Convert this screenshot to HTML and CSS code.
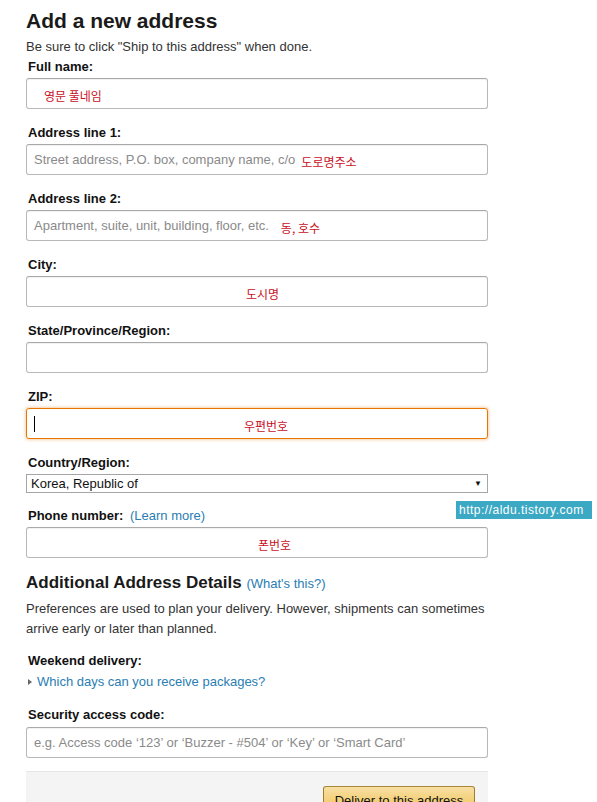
FILE: index.html
```html
<!doctype html>
<html>
    <head>
        <title>Add a new address</title>
        <meta name="viewport" content="width=device-width, initial-scale=1.0" />
        <link rel="stylesheet" href="styles.css">
    </head>
    <body>
        <div class="page">
            <h1>Add a new address</h1>
            <p class="intro">Be sure to click "Ship to this address" when done.</p>

            <div class="group">
                <label class="label">Full name:</label>
                <div class="field"><span class="note note-name">영문 풀네임</span></div>
            </div>
            <div class="group">
                <label class="label">Address line 1:</label>
                <div class="field"><span class="hint">Street address, P.O. box, company name, c/o</span><span class="note note-addr1">도로명주소</span></div>
            </div>
            <div class="group">
                <label class="label">Address line 2:</label>
                <div class="field"><span class="hint">Apartment, suite, unit, building, floor, etc.</span><span class="note note-addr2">동, 호수</span></div>
            </div>
            <div class="group">
                <label class="label">City:</label>
                <div class="field"><span class="note note-city">도시명</span></div>
            </div>
            <div class="group">
                <label class="label">State/Province/Region:</label>
                <div class="field"></div>
            </div>
            <div class="group">
                <label class="label">ZIP:</label>
                <div class="field focused"><span class="caret"></span><span class="note note-zip">우편번호</span></div>
            </div>
            <div class="group group-select">
                <label class="label">Country/Region:</label>
                <div class="select"><span>Korea, Republic of</span><span class="arrow">&#9660;</span></div>
            </div>
            <div class="group group-phone">
                <label class="label">Phone number: <a href="#" class="link">(Learn more)</a></label>
                <div class="field"><span class="note note-phone">폰번호</span></div>
            </div>

            <h2>Additional Address Details <a href="#" class="link">(What's this?)</a></h2>
            <p class="desc">Preferences are used to plan your delivery. However, shipments can sometimes arrive early or later than planned.</p>

            <div class="group">
                <label class="label">Weekend delivery:</label>
                <div class="toggle"><span class="triangle"></span><a href="#" class="link">Which days can you receive packages?</a></div>
            </div>
            <div class="group group-code">
                <label class="label">Security access code:</label>
                <div class="field"><span class="hint">e.g. Access code ‘123’ or ‘Buzzer - #504’ or ‘Key’ or ‘Smart Card’</span></div>
            </div>

            <div class="footer">
                <button class="deliver">Deliver to this address</button>
            </div>
        </div>
        <div class="watermark">http://aldu.tistory.com</div>
    </body>
</html>
```

FILE: styles.css
```css
body {
    margin: 0;
    font-family: "Liberation Sans", Arial, sans-serif;
    font-size: 13px;
    line-height: 19px;
    color: #111;
    background: #fff;
    position: relative;
}
.page {
    padding-left: 26px;
    width: 462px;
}
h1 {
    font-size: 21px;
    line-height: 25px;
    font-weight: 700;
    margin: 8px 0 4px 0;
    color: #1a1a1a;
}
.intro {
    margin: 0 0 1px 0;
    color: #333;
}
.group {
    margin-bottom: 14px;
}
.label {
    display: block;
    font-weight: 700;
    padding-left: 2px;
    margin-bottom: 2px;
    color: #111;
}
.label .link {
    font-weight: 400;
    margin-left: 3px;
}
.field {
    box-sizing: border-box;
    height: 31px;
    border: 1px solid #b8b8b8;
    border-top-color: #a9a9a9;
    border-radius: 3px;
    box-shadow: 0 1px 0 rgba(0,0,0,.05) inset;
    padding: 0 7px;
    display: flex;
    align-items: center;
    white-space: nowrap;
    overflow: hidden;
}
.field.focused {
    border-color: #e77600;
    box-shadow: 0 0 3px 1px rgba(228,121,17,.35);
}
.hint {
    color: #8a8a8a;
}
.note {
    font-family: "Noto Sans CJK KR", sans-serif;
    font-size: 12px;
    color: #c8101e;
    padding-top: 3px;
}
.note-name { margin-left: 10px; }
.note-addr1 { margin-left: 6px; }
.note-addr2 { margin-left: 12px; }
.note-city { margin-left: 212px; }
.note-zip { margin-left: 209px; }
.note-phone { margin-left: 224px; }
.caret {
    width: 1px;
    height: 16px;
    background: #000;
}
.group-select {
    margin-bottom: 13px;
}
.select {
    box-sizing: border-box;
    height: 19px;
    margin-top: 1px;
    border: 1px solid #a6a6a6;
    padding: 0 5px 0 4px;
    display: flex;
    align-items: center;
    justify-content: space-between;
}
.arrow {
    font-size: 8px;
    line-height: 8px;
    color: #111;
}
.link {
    color: #2a7db3;
    text-decoration: none;
}
h2 {
    font-size: 17px;
    line-height: 22px;
    font-weight: 700;
    margin: 0 0 4px 0;
    color: #1a1a1a;
}
h2 .link {
    font-size: 13px;
    font-weight: 400;
}
.desc {
    line-height: 20px;
    margin: 0 0 12px 0;
    color: #333;
}
.toggle {
    display: flex;
    align-items: center;
    padding-left: 2px;
}
.triangle {
    width: 0;
    height: 0;
    border-left: 4px solid #666;
    border-top: 3px solid transparent;
    border-bottom: 3px solid transparent;
    margin-right: 5px;
}
.group-code .label {
    margin-bottom: 3px;
}
.group-code {
    margin-bottom: 13px;
}
.footer {
    background: #f4f4f4;
    border-top: 1px solid #e6e6e6;
    padding: 14px 13px 0 0;
    height: 60px;
    display: flex;
    justify-content: flex-end;
    align-items: flex-start;
}
.deliver {
    width: 152px;
    height: 29px;
    border: 1px solid #a88734;
    border-color: #a88734 #9c7e31 #846a29;
    border-radius: 3px;
    background: linear-gradient(to bottom, #f7dfa5, #f0c14b);
    font-family: "Liberation Sans", Arial, sans-serif;
    font-size: 13px;
    color: #111;
    padding: 0;
}
.watermark {
    position: absolute;
    left: 456px;
    top: 501px;
    width: 136px;
    height: 18px;
    line-height: 18px;
    background: #3ba8c4;
    color: #fff;
    font-size: 12px;
    letter-spacing: 0.5px;
    padding-left: 3px;
    box-sizing: border-box;
}
```
